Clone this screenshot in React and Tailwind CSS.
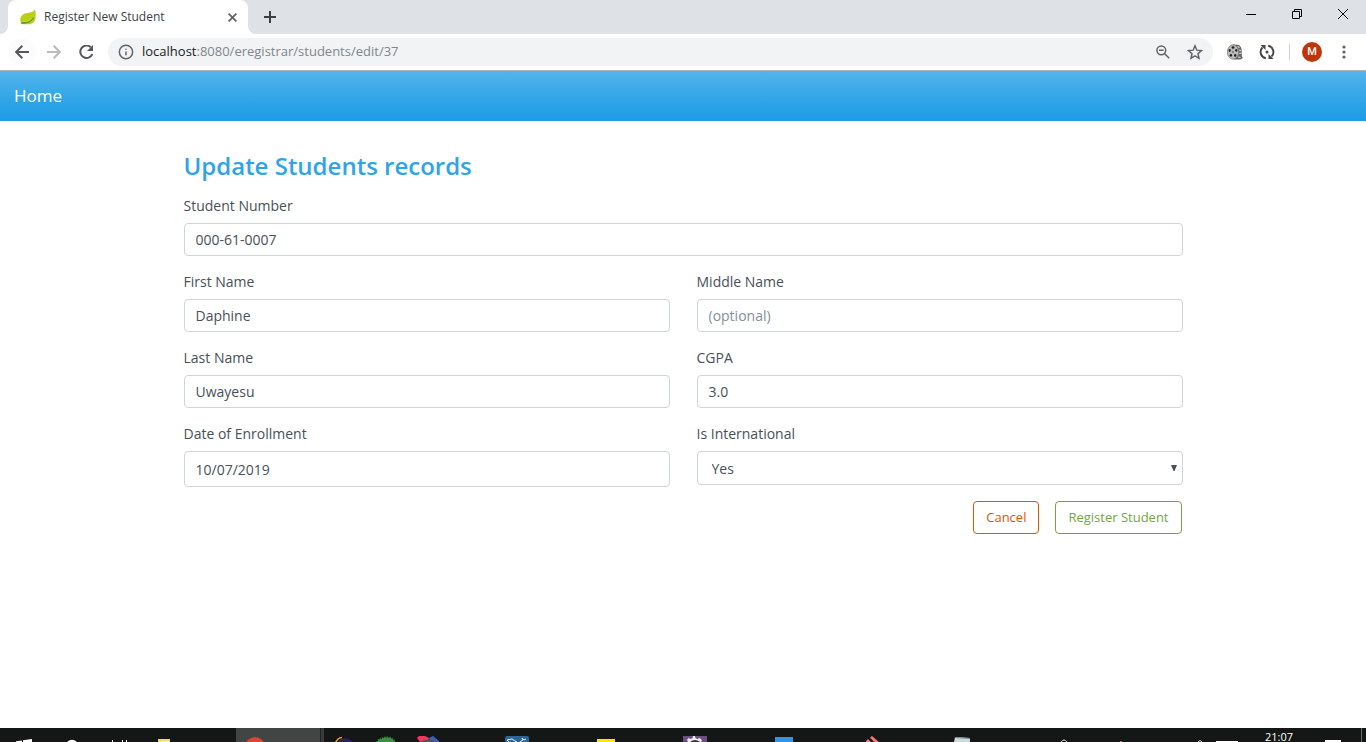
import React from "react";
import { Info } from "lucide-react";

function Leaf() {
  return (
    <svg className="h-4 w-4" viewBox="0 0 16 16" aria-hidden="true">
      <path d="M15 .3c.6 2.600 1 5.600.6 8.400-.5 3.800-3 6.600-7.400 6.600H2.500C.8 14 0 12 .3 9.700.8 6.300 4 4.300 7.500 4 11 3.700 13.600 2.800 15 .3z" fill="#b9cf18" />
      <path d="M15.300 3c.7 5-1.500 7.500-6.300 8.500-2.600.5-5 .3-6.800.7C3 14 9 14.500 12 12c3-2.500 3.900-5 3.300-9z" fill="#c9da3c" />
      <path d="M1.200 14c4 .6 9-.2 12.500-5.300-.8 2-3 4-6 4.600-2.500.4-4.500.2-6.500.7z" fill="#5b9a2b" stroke="#5b9a2b" />
    </svg>
  );
}

function FilmReel() {
  return (
    <svg className="h-4 w-4" viewBox="0 0 16 16" aria-hidden="true">
      <path d="M6 .5 11 .8c3 1 4 4 3.700 7.600l.2 4.200 1 1.400-2.500 1.500H7z" fill="#666" />
      <path d="M10.500 2.500l2 1M12 6l2 .5M12.200 9.500l2-.3M11 13l2.500.5" stroke="#ddd" strokeWidth="1.200" />
      <ellipse cx="6" cy="8" rx="5.700" ry="7.200" fill="#bbb" stroke="#777" strokeWidth=".7" />
      <g fill="#222">
        <ellipse cx="6" cy="3.500" rx="1.400" ry="1.200" />
        <ellipse cx="2.700" cy="6.500" rx="1.100" ry="1.400" />
        <ellipse cx="9.300" cy="6.300" rx="1.100" ry="1.400" />
        <ellipse cx="3.900" cy="11.300" rx="1.200" ry="1.400" />
        <ellipse cx="8.200" cy="11.400" rx="1.200" ry="1.400" />
        <circle cx="6" cy="8" r=".7" />
      </g>
    </svg>
  );
}

function SyncReel() {
  return (
    <svg className="h-4 w-4" viewBox="0 0 16 16" fill="none" stroke="#454545" strokeWidth="1.900" aria-hidden="true">
      <path d="M6.800 14.200A6.300 6.300 0 0 1 3.500 3.500" />
      <path d="M9.200 1.800A6.300 6.300 0 0 1 12.500 12.500" />
      <path d="M1.500 1h5v5z" fill="#454545" stroke="none" />
      <path d="M14.500 15h-5v-5z" fill="#454545" stroke="none" />
      <circle cx="8" cy="8" r="1.500" fill="#454545" stroke="none" />
    </svg>
  );
}

function BrowserChrome() {
  return (
    <header>
      <div className="flex h-[34px] items-stretch bg-[#dee1e6]">
        <div className="flex w-2 items-end bg-white">
          <div className="h-full w-full rounded-br-lg bg-[#dee1e6]" />
        </div>
        <div className="flex w-[240px] items-center rounded-t-lg bg-white pl-3 pr-[10px]">
          <Leaf />
          <span className="ml-2 flex-1 text-[12px] text-[#3c4043]">Register New Student</span>
          <button aria-label="Close tab" className="grid h-3 w-3 place-items-center">
            <svg className="h-[9px] w-[9px]" viewBox="0 0 9 9" stroke="#5f6368" strokeWidth="1.800" aria-hidden="true">
              <path d="M.6.6l7.800 7.800M8.400.6.6 8.400" />
            </svg>
          </button>
        </div>
        <div className="w-2 bg-white">
          <div className="h-full w-full rounded-bl-lg bg-[#dee1e6]" />
        </div>
        <button aria-label="New tab" className="grid w-7 place-items-center">
          <svg className="h-3 w-3" viewBox="0 0 12 12" stroke="#3c4043" strokeWidth="2" aria-hidden="true">
            <path d="M6 0v12M0 6h12" />
          </svg>
        </button>
        <div className="ml-auto flex h-7">
          <button aria-label="Minimize" className="grid w-[46px] place-items-center">
            <svg className="h-[10px] w-[10px]" viewBox="0 0 10 10" aria-hidden="true"><path d="M0 5h10v1H0z" /></svg>
          </button>
          <button aria-label="Restore" className="grid w-[46px] place-items-center">
            <svg className="h-[10px] w-[10px]" viewBox="0 0 10 10" fill="none" stroke="#000" aria-hidden="true">
              <path d="M.5 2.500h7v7h-7zM2.500 2.500v-2h7v7h-2" />
            </svg>
          </button>
          <button aria-label="Close" className="grid w-[46px] place-items-center">
            <svg className="h-[10px] w-[10px]" viewBox="0 0 10 10" stroke="#000" aria-hidden="true">
              <path d="M0 0l10 10M10 0 0 10" />
            </svg>
          </button>
        </div>
      </div>
      <div className="flex h-9 items-center bg-white pl-2 pr-[14px]">
        <button aria-label="Back" className="grid h-7 w-7 place-items-center rounded-full bg-[#fcfcfc]">
          <svg className="h-[14px] w-[14px]" viewBox="0 0 14 14" fill="none" stroke="#54585d" strokeWidth="2" aria-hidden="true">
            <path d="M14 7H1.500M7.300.8 1.200 7l6.100 6.200" />
          </svg>
        </button>
        <button aria-label="Forward" className="ml-1 grid h-7 w-7 place-items-center">
          <svg className="h-[14px] w-[14px]" viewBox="0 0 14 14" fill="none" stroke="#b9bbbe" strokeWidth="2" aria-hidden="true">
            <path d="M0 7h12.500M6.700.8 12.800 7l-6.100 6.200" />
          </svg>
        </button>
        <button aria-label="Reload" className="ml-1 grid h-7 w-7 place-items-center">
          <svg className="h-[14px] w-[14px]" viewBox="0 0 14 14" aria-hidden="true">
            <path d="M11.800 2.300A6.200 6.200 0 1 0 13.300 9" fill="none" stroke="#54585d" strokeWidth="2" />
            <path d="M14 0v6H8z" fill="#54585d" />
          </svg>
        </button>
        <div className="ml-2 flex h-7 flex-1 items-center rounded-full bg-[#f1f3f4] pl-[10px] pr-[10px]">
          <Info className="h-4 w-4 text-[#5f6368]" strokeWidth={2.2} aria-hidden="true" />
          <span className="ml-2 flex-1 text-[13px] text-[#80868b]">
            <span className="text-[#202124]">localhost</span>:8080/eregistrar/students/edit/37
          </span>
          <button aria-label="Zoom" className="grid h-7 w-4 place-items-center">
            <svg className="h-[14px] w-[14px]" viewBox="0 0 14 14" fill="none" stroke="#5f6368" strokeWidth="1.500" aria-hidden="true">
              <circle cx="5.300" cy="5.300" r="4.400" />
              <path d="M3 5.300h4.600M8.500 8.500l4.700 4.700" />
            </svg>
          </button>
          <button aria-label="Bookmark" className="ml-4 grid h-7 w-4 place-items-center">
            <svg className="h-4 w-4" viewBox="0 0 14 14" fill="none" stroke="#5f6368" strokeWidth="1.300" aria-hidden="true">
              <path d="M7 1.600l1.600 3.800 4.100.4-3.100 2.700.9 4L7 10.400l-3.500 2.100.9-4L1.300 5.800l4.100-.4z" />
            </svg>
          </button>
        </div>
        <button aria-label="Video extension" className="ml-[14px]"><FilmReel /></button>
        <button aria-label="Sync extension" className="ml-4"><SyncReel /></button>
        <span className="ml-[14px] h-4 w-px bg-[#cfd1d4]" />
        <button aria-label="Profile" className="ml-3 grid h-5 w-5 place-items-center rounded-full bg-[#bf360c] font-['Roboto',sans-serif] text-[11px] font-medium text-white">M</button>
        <button aria-label="Menu" className="ml-[14px] grid h-7 w-4 place-items-center">
          <svg className="h-[14px] w-1" viewBox="0 0 4 14" fill="#5f6368" aria-hidden="true">
            <circle cx="2" cy="2" r="1.600" /><circle cx="2" cy="7" r="1.600" /><circle cx="2" cy="12" r="1.600" />
          </svg>
        </button>
      </div>
      <div className="h-px bg-[#b0b4b8]" />
    </header>
  );
}

const control =
  "h-[33px] w-full rounded-[4px] border border-[#ced4da] bg-white px-[11px] text-[14px] text-[#495057] placeholder:text-[#868e96] outline-none focus:border-[#2fa4e7]";

function Field({ id, label, children }) {
  return (
    <div>
      <label htmlFor={id} className="mb-[7px] block w-fit text-[14px] leading-5 text-[#495057]">{label}</label>
      {children}
    </div>
  );
}

function StudentForm() {
  return (
    <main className="mx-auto w-full max-w-[999px] flex-1 pt-7">
      <h1 className="text-[24px] leading-[34px] font-semibold text-[#2fa4e7]">Update Students records</h1>
      <form className="mt-[13px]" onSubmit={(e) => e.preventDefault()}>
        <div className="grid grid-cols-2 gap-x-[27px] gap-y-4">
          <div className="col-span-2">
            <Field id="number" label="Student Number">
              <input id="number" className={control} defaultValue="000-61-0007" />
            </Field>
          </div>
          <Field id="first" label="First Name">
            <input id="first" className={control} defaultValue="Daphine" />
          </Field>
          <Field id="middle" label="Middle Name">
            <input id="middle" className={control} placeholder="(optional)" />
          </Field>
          <Field id="last" label="Last Name">
            <input id="last" className={control} defaultValue="Uwayesu" />
          </Field>
          <Field id="cgpa" label="CGPA">
            <input id="cgpa" className={control} defaultValue="3.0" />
          </Field>
          <Field id="date" label="Date of Enrollment">
            <input id="date" className="h-9 w-full rounded-[4px] border border-[#ced4da] bg-white px-[11px] text-[14px] text-[#495057] outline-none focus:border-[#2fa4e7]" defaultValue="10/07/2019" />
          </Field>
          <Field id="international" label="Is International">
            <div className="relative">
              <select id="international" defaultValue="Yes" className="block h-[34px] w-full appearance-none rounded-[4px] border border-[#ced4da] bg-white pl-[14px] pr-6 text-[14px] text-[#495057] outline-none focus:border-[#2fa4e7]">
                <option>Yes</option>
                <option>No</option>
              </select>
              <svg className="pointer-events-none absolute right-[6px] top-[14px] h-[6px] w-[6px]" viewBox="0 0 6 6" fill="#495057" aria-hidden="true">
                <path d="M0 0h6L3.500 6h-1z" />
              </svg>
            </div>
          </Field>
        </div>
        <div className="mt-[14px] flex justify-end gap-4 pr-px">
          <button type="button" className="h-[33px] rounded-[4px] border border-[#dd5600] px-3 text-[13px] text-[#dd5600]">Cancel</button>
          <button type="submit" className="h-[33px] rounded-[4px] border border-[#73a839] px-3 text-[13px] text-[#73a839]">Register Student</button>
        </div>
      </form>
    </main>
  );
}

function TaskIcon({ name, slot, width, children }) {
  return (
    <button aria-label={name} className={"flex h-full shrink-0 justify-center " + slot}>
      <svg className="h-[14px]" width={width} viewBox={`0 0 ${width} 14`} aria-hidden="true">{children}</svg>
    </button>
  );
}

function Taskbar() {
  return (
    <footer className="flex h-[14px] overflow-hidden bg-[#151616]">
      <TaskIcon name="Start" slot="w-12" width={16}>
        <path d="M0 14v-.8l6-.8V14zM7 14v-1.800L16 11v3z" fill="#fff" />
      </TaskIcon>
      <TaskIcon name="Search" slot="w-12" width={12}>
        <path d="M1 14q5-4.500 10 0z" fill="#fff" />
      </TaskIcon>
      <TaskIcon name="Task view" slot="w-12" width={18}>
        <path d="M1 12h1v2H1zM11 12h1v2h-1zM15 12h1v2h-1z" fill="#fff" />
      </TaskIcon>
      <TaskIcon name="File Explorer" slot="w-10" width={12}>
        <path d="M0 11h12v3H0z" fill="#f8d775" /><path d="M3 13h8v1H3z" fill="#fff0b4" />
      </TaskIcon>
      <div className="ml-[52px] flex w-[84px] shrink-0 bg-[#434444]">
        <TaskIcon name="Chrome" slot="w-[38px]" width={20}>
          <circle cx="10" cy="19" r="10" fill="#db4437" />
        </TaskIcon>
      </div>
      <div className="w-1 shrink-0 border-l border-[#222] bg-[#393a3a]" />
      <TaskIcon name="Eclipse" slot="w-10" width={20}>
        <circle cx="11" cy="19" r="9" fill="#2c2255" />
        <path d="M1 16Q3 10 8 9.500" fill="none" stroke="#f7941e" strokeWidth="1.500" />
      </TaskIcon>
      <TaskIcon name="Spring" slot="w-11" width={20}>
        <path d="M0 14l1-1 1 .3-.3-2 2 .3V10l2 1 .5-2 1.500 1.300L9 8l1 2 1.500-2 1 2 2-1.500.3 2 2-.7v2l2-.3-.3 2L20 14z" fill="#38913c" />
      </TaskIcon>
      <TaskIcon name="IntelliJ" slot="w-10" width={22}>
        <path d="M0 10l2-2h6l4 2-1 4H3z" fill="#fe315d" />
        <path d="M12 10l4-2 6 5v1h-9z" fill="#3d5fc4" />
        <path d="M4 13l4-1h9v2H4z" fill="#555" />
      </TaskIcon>
      <TaskIcon name="MySQL Workbench" slot="ml-6 w-[89px]" width={24}>
        <path d="M0 14v-4q0-2 2-2h20q2 0 2 2v4z" fill="#2c6696" />
        <path d="M4 14l-2-2 5-1 3 2 2 1M15 14l3-2-1-2 2 2 2-1" fill="none" stroke="#e5eef5" />
      </TaskIcon>
      <TaskIcon name="Notes" slot="w-[89px]" width={18}><path d="M0 11h18v3H0z" fill="#ffe500" /></TaskIcon>
      <TaskIcon name="Settings" slot="w-[89px]" width={24}>
        <path d="M0 8h24v6H0z" fill="#6c5080" />
        <path d="M5 14l-1-2 1.500-2 2 1 2-.7.500-2.300h2l.5 2.300 2 .7 2-1L19 12l-1 2z" fill="#eee" />
        <path d="M7 14q5-4 10 0z" fill="#333" />
      </TaskIcon>
      <TaskIcon name="Mail" slot="w-[89px]" width={18}><path d="M0 9h18v5H0z" fill="#3595e3" /></TaskIcon>
      <TaskIcon name="Editor" slot="w-[89px]" width={14}>
        <path d="M4 9.500L6 8l7 6H8zM0 13l2-2 3 3H0z" fill="#fa7470" />
      </TaskIcon>
      <TaskIcon name="Notepad" slot="w-[89px]" width={16}><path d="M1 9l15 1v4H0z" fill="#c8dcdf" /><path d="M1 9l15 1v1L1 10z" fill="#7c8586" /></TaskIcon>
      <div className="ml-auto flex shrink-0">
        <TaskIcon name="People" slot="w-3" width={8}><path d="M1 14q3-4 6 0" fill="none" stroke="#ddd" /></TaskIcon>
        <TaskIcon name="Alert" slot="ml-[46px] w-2" width={3}><path d="M1 13h2v1H1z" fill="#c95a4d" /></TaskIcon>
        <TaskIcon name="Network" slot="ml-[70px] w-3" width={6}><path d="M1 14q2-3 4 0" fill="none" stroke="#ddd" /></TaskIcon>
        <TaskIcon name="Battery" slot="ml-[3px] w-9" width={22}><path d="M0 13h22v1H0z" fill="#fff" /></TaskIcon>
        <time className="ml-5 mt-1 block w-8 text-[11px] leading-[10px] text-white">21:07</time>
        <TaskIcon name="Notifications" slot="ml-3 w-12" width={16}><path d="M0 12h16v2H0z" fill="#fff" /></TaskIcon>
        <div className="ml-1 w-[5px] border-l border-[#6c6c6c]" />
      </div>
    </footer>
  );
}

export default function App() {
  return (
    <div className="flex min-h-screen flex-col bg-white font-['Open_Sans','Noto_Sans',sans-serif]">
      <BrowserChrome />
      <nav className="flex h-[50px] items-center bg-[linear-gradient(#54b4eb,#2fa4e7_60%,#1d9ce5)] px-[14px]">
        <a href="#home" className="text-[17px] leading-7 text-white">Home</a>
      </nav>
      <StudentForm />
      <Taskbar />
    </div>
  );
}
